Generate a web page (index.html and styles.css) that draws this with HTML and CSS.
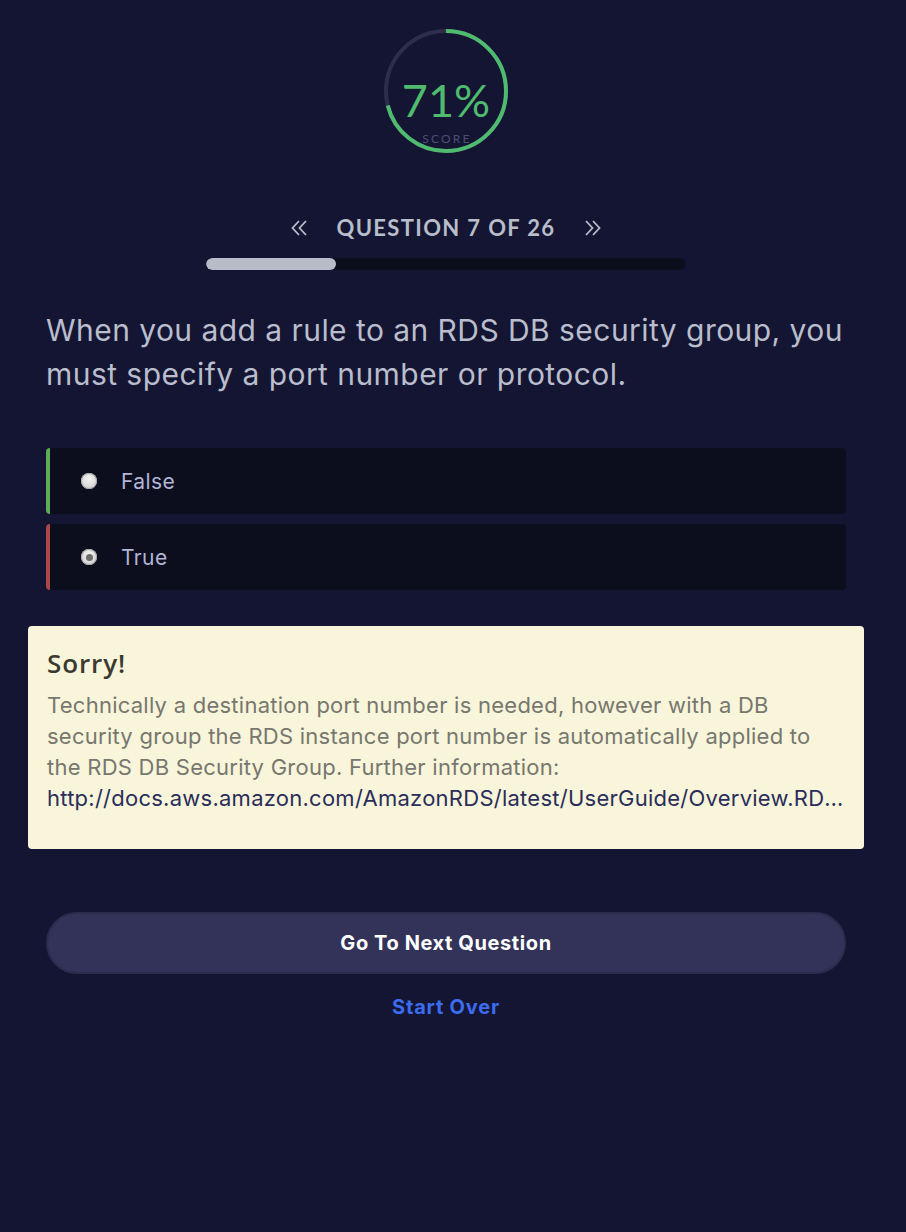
FILE: index.html
```html
<!DOCTYPE html>
<html>
<head>
<meta charset="utf-8">
<link rel="stylesheet" href="styles.css">
</head>
<body>
<main class="page">
  <div class="score">
    <svg class="ring" width="124" height="124" viewBox="0 0 124 124">
      <circle cx="62" cy="62" r="60" fill="none" stroke="#2d2e4b" stroke-width="4"/>
      <circle cx="62" cy="62" r="60" fill="none" stroke="#4fbb6e" stroke-width="4" stroke-dasharray="267.7 400" transform="rotate(-90 62 62)"/>
    </svg>
    <div class="score-text">
      <span class="pct">71%</span>
      <span class="label">SCORE</span>
    </div>
  </div>

  <div class="nav">
    <svg class="chev" width="16" height="16" viewBox="0 0 16 16"><polyline points="8,1 1.5,8 8,15" fill="none" stroke="#b8bdca" stroke-width="1.8"/><polyline points="15,1 8.5,8 15,15" fill="none" stroke="#b8bdca" stroke-width="1.8"/></svg>
    <span class="nav-title">QUESTION 7 OF 26</span>
    <svg class="chev" width="16" height="16" viewBox="0 0 16 16"><polyline points="1,1 7.5,8 1,15" fill="none" stroke="#b8bdca" stroke-width="1.8"/><polyline points="8,1 14.5,8 8,15" fill="none" stroke="#b8bdca" stroke-width="1.8"/></svg>
  </div>
  <div class="bar"><div class="bar-fill" style="width:27%"></div></div>

  <p class="question">When you add a rule to an RDS DB security group, you must specify a port number or protocol.</p>

  <div class="options">
    <div class="option correct"><span class="radio"></span><span class="opt-text">False</span></div>
    <div class="option wrong"><span class="radio checked"></span><span class="opt-text">True</span></div>
  </div>

  <div class="feedback">
    <h2 class="fb-title">Sorry!</h2>
    <p class="fb-text">Technically a destination port number is needed, however with a DB security group the RDS instance port number is automatically applied to the RDS DB Security Group. Further information:</p>
    <p class="fb-link">http://docs.aws.amazon.com/AmazonRDS/latest/UserGuide/Overview.RDSSecurityGroups.html</p>
  </div>

  <button class="next">Go To Next Question</button>
  <div class="restart">Start Over</div>
</main>
</body>
</html>
```
FILE: styles.css
```css
html, body {
  margin: 0;
  padding: 0;
  background: #141532;
}
body {
  font-family: Inter, "Noto Sans", sans-serif;
}
.page {
  width: 800px;
  margin-left: 46px;
  padding-top: 29px;
  display: flex;
  flex-direction: column;
}
.score {
  position: relative;
  width: 124px;
  height: 124px;
  align-self: center;
}
.ring { display: block; }
.score-text {
  position: absolute;
  inset: 0;
  display: flex;
  flex-direction: column;
  align-items: center;
}
.pct {
  font-family: Lato, sans-serif;
  font-size: 45px;
  font-weight: 400;
  color: #4fbb6e;
  line-height: 46px;
  margin-top: 48px;
}
.label {
  font-family: Lato, sans-serif;
  font-size: 12px;
  letter-spacing: 2.2px;
  color: #4d4f77;
  line-height: 14px;
  margin-top: 9px;
  padding-left: 2px;
}
.nav {
  margin-top: 60px;
  display: flex;
  justify-content: center;
  align-items: center;
  gap: 30px;
  height: 30px;
}
.chev { display: block; }
.nav-title {
  font-family: Lato, sans-serif;
  font-weight: 700;
  font-size: 22px;
  letter-spacing: 1.35px;
  color: #b8bdca;
  line-height: 30px;
}
.bar {
  align-self: center;
  width: 480px;
  height: 12px;
  margin-top: 15px;
  background: #0d0e1d;
  border-radius: 6px;
  overflow: hidden;
}
.bar-fill {
  height: 100%;
  background: #b7bcc8;
  border-radius: 6px;
}
.question {
  margin: 38px 0 0;
  font-size: 30px;
  letter-spacing: 0.45px;
  line-height: 44px;
  color: #b9bdcc;
  font-weight: 400;
}
.options {
  margin-top: 52px;
  display: flex;
  flex-direction: column;
  gap: 10px;
}
.option {
  height: 66px;
  background: #0d0e1d;
  border-radius: 4px;
  display: flex;
  align-items: center;
  box-sizing: border-box;
  padding-left: 31px;
}
.option.correct { border-left: 4px solid #5cad57; }
.option.wrong { border-left: 4px solid #a94848; }
.radio {
  width: 16px;
  height: 16px;
  border-radius: 50%;
  background: radial-gradient(circle at 50% 35%, #f2f2f2 0%, #d6d6d6 70%, #bdbdbd 100%);
  box-shadow: inset 0 0 0 1px #a6a6a6;
  display: flex;
  align-items: center;
  justify-content: center;
}
.radio.checked::after {
  content: "";
  width: 7px;
  height: 7px;
  border-radius: 50%;
  background: #6d6d6d;
}
.opt-text {
  margin-left: 24px;
  font-size: 21px;
  letter-spacing: 0.4px;
  color: #b2b4d8;
}
.feedback {
  margin: 36px -18px 0;
  background: #f8f5da;
  border-radius: 4px;
  padding: 22px 19px 35px;
}
.fb-title {
  margin: 0;
  font-family: "Open Sans", sans-serif;
  font-size: 26px;
  font-weight: 600;
  letter-spacing: 0.9px;
  color: #3a3a30;
  line-height: 30px;
}
.fb-text, .fb-link {
  margin: 0;
  font-size: 22px;
  letter-spacing: 0.25px;
  line-height: 31px;
}
.fb-text {
  margin-top: 12px;
  color: #77776f;
}
.fb-link {
  color: #2b2d5a;
  white-space: nowrap;
  overflow: hidden;
  text-overflow: ellipsis;
}
.next {
  margin-top: 63px;
  height: 62px;
  border-radius: 31px;
  background: #33335a;
  border: 2px solid #2b2b4e;
  color: #ffffff;
  font-family: Inter, sans-serif;
  font-weight: 700;
  font-size: 20px;
  letter-spacing: 0.6px;
  cursor: pointer;
}
.restart {
  margin-top: 21px;
  text-align: center;
  font-weight: 700;
  font-size: 20px;
  letter-spacing: 0.8px;
  line-height: 24px;
  color: #3c6cf0;
}
```
